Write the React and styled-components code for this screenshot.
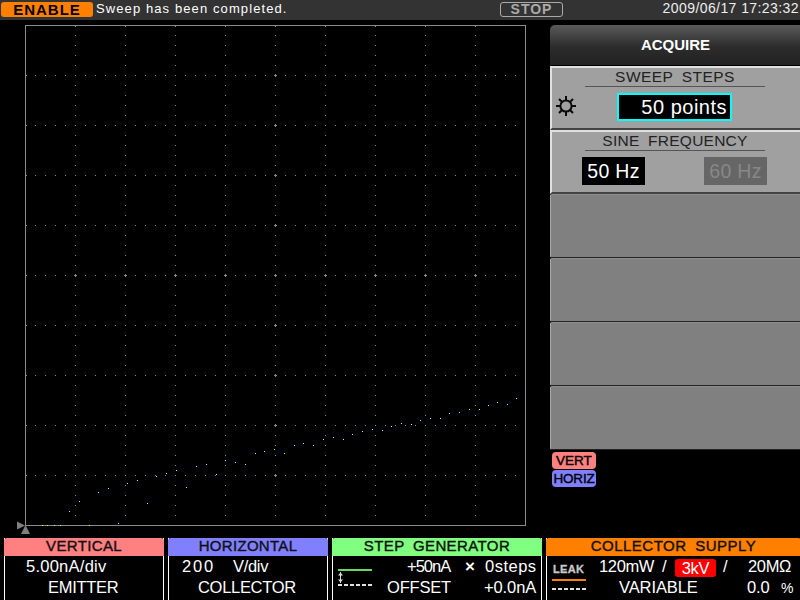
import React from "react";
import styled, { createGlobalStyle } from "styled-components";

const Global = createGlobalStyle`
  html, body { margin: 0; padding: 0; background: #000; }
  #root { width: 800px; height: 600px; overflow: hidden; }
  * { box-sizing: border-box; }
`;

const Screen = styled.div`
  width: 800px; height: 600px; background: #000; display: flex; flex-direction: column;
  font-family: "Liberation Sans", Arial, sans-serif; color: #fff; overflow: hidden;
`;
const TopBar = styled.div`
  height: 20px; flex: none; background: #333; display: flex; align-items: center; padding: 0 1px 0 1px;
`;
const EnablePill = styled.div`
  width: 92px; height: 15px; background: #ff8000; border-radius: 3px; color: #000; font-weight: 700;
  font-size: 15px; letter-spacing: 1px; line-height: 16px; text-align: center; margin-top: -2px;
`;
const Message = styled.div`
  width: 404px; margin-left: 3px; font-size: 13px; letter-spacing: 1.1px; margin-top: -3px; white-space: nowrap;
`;
const StopButton = styled.div`
  width: 63px; height: 15px; border: 1px solid #aaa; border-radius: 3px; color: #aaa; font-weight: 700;
  font-size: 14px; letter-spacing: 1px; line-height: 13px; text-align: center; margin-top: -2px;
`;
const Clock = styled.div`
  margin-left: auto; font-size: 14px; letter-spacing: 0.42px; margin-top: -4px; white-space: nowrap; color: #eee;
`;
const Main = styled.div`
  height: 518px; flex: none; display: flex;
`;
const ScopeSvg = styled.svg`
  width: 520px; height: 518px; margin-left: 15px; flex: none; display: block;
`;
const Side = styled.div`
  margin-left: 15px; width: 250px; padding-top: 5px; display: flex; flex-direction: column;
`;
const MenuHeader = styled.div`
  height: 40px; border-radius: 5px 0 0 0; background: linear-gradient(#5a5a5a, #2c2c2c 55%, #222);
  display: flex; align-items: center; justify-content: center; font-size: 15px; font-weight: 700;
  padding: 0 0 2px 1px; margin-bottom: 1px;
`;
const SoftKey = styled.div`
  height: 64px; flex: none; background: ${p => (p.$active ? "#a0a0a0" : "#808080")};
  border-top: ${p => (p.$active ? "2px solid #e0e0e0" : "1px solid #8e8e8e")};
  border-left: ${p => (p.$active ? "2px solid #e0e0e0" : "1px solid #a8a8a8")};
  border-bottom: ${p => (p.$active ? "2px solid #444" : "1px solid #222")};
  color: #222; display: flex; flex-direction: column;
  border-top-left-radius: ${p => (p.$active ? "0" : "2px")};
  border-bottom-left-radius: ${p => (p.$active ? "0" : "2px")};
`;
const KeyTitle = styled.div`
  margin: 1px 0 0 33px; width: 180px; height: 18px; border-bottom: 1px solid #555; text-align: center;
  font-size: 15.5px; line-height: 16px; letter-spacing: ${p => p.$ls}px; word-spacing: 4px; color: #222; white-space: nowrap;
`;
const KeyRow = styled.div`
  flex: 1; display: flex; align-items: flex-start; padding-top: 6px;
`;
const Gear = styled.svg`
  width: 22px; height: 22px; margin-left: 3px; margin-top: 2px; flex: none;
`;
const Spinner = styled.div`
  margin-left: 40px; width: 115px; height: 28px; border: 2px solid #0ff; background: #000; color: #fff;
  font-size: 20px; line-height: 25px; text-align: right; padding-right: 3px; letter-spacing: 0.5px; white-space: nowrap;
`;
const Choice = styled.div`
  width: 63px; height: 28px; margin-left: ${p => p.$gap}px; background: ${p => (p.$on ? "#000" : "#666")};
  color: ${p => (p.$on ? "#fff" : "#888")}; font-size: 19.5px; line-height: 28px; text-align: center; letter-spacing: 0.3px;
`;
const Tags = styled.div`
  margin-top: 2px; margin-left: 2px; display: flex; flex-direction: column; gap: 1px;
`;
const Tag = styled.div`
  width: 44px; height: 17px; border-radius: 4px; background: ${p => p.$color}; color: #000; text-align: center;
  font-size: 13.5px; line-height: 17px; letter-spacing: ${p => p.$ls || 0}px; -webkit-text-stroke: 0.4px #000;
`;
const Footer = styled.div`
  height: 62px; flex: none; display: flex; gap: 4px; padding-left: 4px;
`;
const Readout = styled.div`
  width: ${p => p.$w}px; flex: none; border-left: 1px solid #fff; border-right: ${p => (p.$noRight ? "0" : "1px solid #fff")};
  display: flex; flex-direction: column; height: 62px; background: #000;
`;
const ReadoutTitle = styled.div`
  height: 18px; flex: none; margin: 0 -1px; background: ${p => p.$color}; color: #111; border-radius: 3px 3px 0 0;
  text-align: center; font-size: 15px; line-height: 16px; letter-spacing: ${p => p.$ls}px;
  word-spacing: ${p => p.$ws || 0}px; -webkit-text-stroke: 0.4px #111; white-space: nowrap;
`;
const ReadoutBody = styled.div`
  flex: 1; position: relative; font-size: 16.5px; line-height: 21px; color: #fff; white-space: nowrap;
`;
const Line = styled.div`
  display: flex; height: 21px; padding-left: ${p => p.$pl || 0}px; letter-spacing: ${p => p.$ls ?? -0.3}px;
`;
const Cell = styled.span`
  display: block; flex: none; width: ${p => p.$w}px; padding-left: ${p => p.$pad || 0}px;
  letter-spacing: ${p => (p.$ls !== undefined ? `${p.$ls}px` : "inherit")};
`;
const Percent = styled.span`
  font-size: 14px; letter-spacing: 0; padding-top: 1px;
`;
const MiniIcon = styled.svg`
  position: absolute; left: ${p => p.$l}px; top: 3px; width: ${p => p.$s}px; height: 38px;
`;
const RedBadge = styled.span`
  display: block; flex: none; width: 41px; height: 18px; margin-top: 3px; line-height: 18px; background: #f00; border-radius: 3px; text-align: center;
`;
const Mult = styled.span`
  display: block; flex: none; width: 9px; margin: 0 11px 0 12px; font-weight: 700; font-size: 17px; text-align: center;
`;

const pts = [[42,525],[47,525],[54,525],[60,525],[89,525],[69,511],[79,501],[98,492],[108,488],[118,523],[127,483],[137,480],[147,503],[156,476],[166,473],[176,470],[186,487],[196,466],[206,464],[216,474],[225,460],[235,462],[245,464],[255,453],[264,451],[274,449],[284,453],[294,445],[303,443],[313,445],[323,439],[333,437],[343,439],[352,434],[362,431],[372,429],[382,430],[391,426],[401,423],[411,424],[420,420],[430,418],[440,418],[449,413],[459,412],[469,409],[479,409],[488,405],[497,402],[507,404],[516,398]];

function Graticule() {
  const dots = [];
  const C = "#8a8a8a";
  const along = [26, ...Array.from({ length: 49 }, (_, k) => 35 + k * 10)];
  for (let i = 1; i < 10; i++) {
    const p = 25 + i * 50;
    along.forEach(q => {
      dots.push(<rect key={`h${i}-${q}`} x={q} y={p} width="1" height="1" fill={C} />);
      if ((q - 25) % 50) dots.push(<rect key={`v${i}-${q}`} x={p} y={q} width="1" height="1" fill={C} />);
    });
    dots.push(<path key={`c${i}`} d={`M${p - 1} 275.5h3M${p + 0.5} 274v3M274 ${p + 0.5}h3M275.5 ${p - 1}v3`} stroke={C} strokeWidth="1" fill="none" />);
  }
  return (
    <ScopeSvg viewBox="15 20 520 518" shapeRendering="crispEdges">
      {dots}
      <rect x="25.5" y="25.5" width="500" height="500" fill="none" stroke="#8a8a8a" strokeWidth="1" />
      {pts.map(([x, y], i) => <rect key={i} x={x} y={y} width="1" height="1" fill="#ff0" />)}
      <path d="M17 521.5l8 4-8 4z" fill="#808080" shapeRendering="auto" />
      <path d="M25.5 525l4.5 9h-9z" fill="#808080" shapeRendering="auto" />
    </ScopeSvg>
  );
}

const Dashes = ({ y }) => (
  <g fill="#e0e0e0">
    {[0, 6, 12, 18, 24, 30].map(x => <rect key={x} x={x} y={y} width="4" height="2" />)}
  </g>
);

export default function App() {
  return (
    <Screen>
      <Global />
      <TopBar>
        <EnablePill>ENABLE</EnablePill>
        <Message>Sweep has been completed.</Message>
        <StopButton>STOP</StopButton>
        <Clock>2009/06/17 17:23:32</Clock>
      </TopBar>
      <Main>
        <Graticule />
        <Side>
          <MenuHeader>ACQUIRE</MenuHeader>
          <SoftKey $active>
            <KeyTitle $ls={0.45}>SWEEP STEPS</KeyTitle>
            <KeyRow>
              <Gear viewBox="0 0 22 22" fill="none" stroke="#0a0a0a">
                <circle cx="11" cy="11" r="5.6" strokeWidth="2" />
                <path d="M11 1v4M11 17v4M1 11h4M17 11h4M4 4l2.8 2.8M15.2 15.2l2.8 2.8M18 4l-2.8 2.8M6.8 15.2l-2.8 2.8" strokeWidth="2" />
              </Gear>
              <Spinner>50 points</Spinner>
            </KeyRow>
          </SoftKey>
          <SoftKey $active>
            <KeyTitle $ls={0.25}>SINE FREQUENCY</KeyTitle>
            <KeyRow>
              <Choice $on $gap={30}>50 Hz</Choice>
              <Choice $gap={59}>60 Hz</Choice>
            </KeyRow>
          </SoftKey>
          <SoftKey />
          <SoftKey />
          <SoftKey />
          <SoftKey />
          <Tags>
            <Tag $color="#ff8080">VERT</Tag>
            <Tag $color="#8080ff" $ls={-0.2}>HORIZ</Tag>
          </Tags>
        </Side>
      </Main>
      <Footer>
        <Readout $w={160}>
          <ReadoutTitle $color="#ff8080" $ls={0.35}>VERTICAL</ReadoutTitle>
          <ReadoutBody>
            <Line $pl={21} $ls={0.25}>5.00nA/div</Line>
            <Line $pl={43}>EMITTER</Line>
          </ReadoutBody>
        </Readout>
        <Readout $w={160}>
          <ReadoutTitle $color="#8080ff" $ls={0.3}>HORIZONTAL</ReadoutTitle>
          <ReadoutBody>
            <Line $pl={13}><Cell $w={51} $ls={1.8}>200</Cell>V/div</Line>
            <Line $pl={29}>COLLECTOR</Line>
          </ReadoutBody>
        </Readout>
        <Readout $w={210}>
          <ReadoutTitle $color="#80ff80" $ls={0.4} $ws={4}>STEP GENERATOR</ReadoutTitle>
          <ReadoutBody>
            <MiniIcon $l={5} $s={36} viewBox="0 0 36 38" shapeRendering="crispEdges">
              <rect x="0" y="10" width="34" height="2" fill="#66d866" />
              <path d="M2.5 13v11" stroke="#ddd" strokeWidth="1" />
              <path d="M0 16.5l2.5-3 2.5 3zM0 20.5l2.5 3 2.5-3z" fill="#ddd" shapeRendering="auto" />
              <Dashes y={25} />
            </MiniIcon>
            <Line $pl={74}><Cell $w={46} $ls={-1}>+50nA</Cell><Mult>×</Mult><Cell $w={53} $ls={0.5}>0steps</Cell></Line>
            <Line $pl={54} $ls={-0.2}><Cell $w={97}>OFFSET</Cell><Cell $w={53} $ls={-0.1}>+0.0nA</Cell></Line>
          </ReadoutBody>
        </Readout>
        <Readout $w={254} $noRight>
          <ReadoutTitle $color="#ff8000" $ls={0.5} $ws={4}>COLLECTOR SUPPLY</ReadoutTitle>
          <ReadoutBody>
            <MiniIcon $l={5} $s={36} viewBox="0 0 36 38" shapeRendering="crispEdges">
              <text x="1" y="14" fontSize="11" fontWeight="700" fill="#c8c8c8" stroke="#c8c8c8" strokeWidth="0.3" fontFamily="Liberation Sans, sans-serif" shapeRendering="auto" textLength="31">LEAK</text>
              <rect x="0" y="20" width="34" height="2" fill="#ff8000" />
              <Dashes y={29} />
            </MiniIcon>
            <Line $pl={52} $ls={-0.35}>
              <Cell $w={63}>120mW</Cell><Cell $w={13}>/</Cell><RedBadge>3kV</RedBadge>
              <Cell $w={32} $pad={7}>/</Cell>20MΩ
            </Line>
            <Line $pl={72} $ls={-0.1}><Cell $w={128}>VARIABLE</Cell><Cell $w={34}>0.0</Cell><Percent>%</Percent></Line>
          </ReadoutBody>
        </Readout>
      </Footer>
    </Screen>
  );
}
